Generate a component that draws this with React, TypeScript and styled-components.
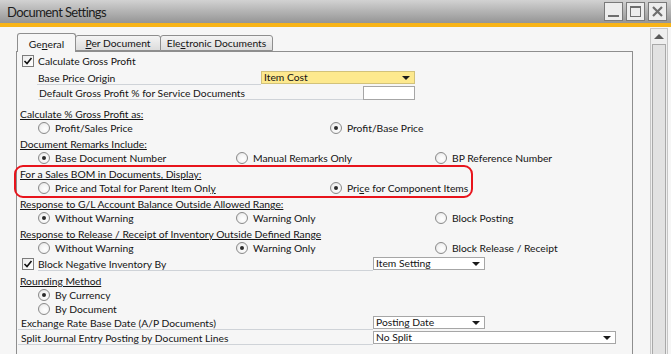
import React from 'react';
import styled, { createGlobalStyle } from 'styled-components';

const Global = createGlobalStyle`
  html, body { margin: 0; padding: 0; background: #f6f6f6; }
  body {
    font-family: Lato, "Liberation Sans", Arial, sans-serif;
    font-size: 10.3px;
    color: #141414;
  }
  * { box-sizing: border-box; }
`;

const Window = styled.div`
  width: 671px;
  height: 354px;
  overflow: hidden;
  display: flex;
  flex-direction: column;
  background: #f6f6f6;
`;

const TitleBar = styled.div`
  height: 23px;
  flex: none;
  display: flex;
  align-items: flex-start;
  justify-content: space-between;
  padding: 0 4px 0 7px;
  background: linear-gradient(#d2d2d2, #b0b0b0 55%, #959595);
`;

const Title = styled.div`
  font-size: 13px;
  letter-spacing: -0.6px;
  line-height: 24px;
  color: #1c1c1c;
`;

const WinButtons = styled.div`
  display: flex;
  gap: 3px;
  margin-top: 2px;
`;

const WinButton = styled.div`
  width: 19px;
  height: 19px;
  border: 1px solid #7a7a7a;
  background: #ededed;
  display: flex;
  align-items: center;
  justify-content: center;
`;

const OrangeBar = styled.div`
  height: 4px;
  flex: none;
  background: #f8b418;
`;

const Body = styled.div`
  flex: 1;
  display: flex;
  min-height: 0;
`;

const Main = styled.div`
  width: 633px;
  flex: none;
  padding: 6px 0 0 16px;
  display: flex;
  flex-direction: column;
`;

const TabStrip = styled.div`
  height: 18px;
  display: flex;
  align-items: flex-end;
  padding-left: 1px;
  position: relative;
  z-index: 1;
`;

const Tab = styled.div<{ $active?: boolean; $w: number }>`
  width: ${(p) => p.$w}px;
  height: ${(p) => (p.$active ? 19 : 16)}px;
  margin-bottom: ${(p) => (p.$active ? -1 : 0)}px;
  margin-left: -1px;
  border: 1px solid #8e8e8e;
  border-bottom: ${(p) => (p.$active ? 'none' : '1px solid #8e8e8e')};
  border-radius: 3px 3px 0 0;
  background: ${(p) => (p.$active ? '#f6f6f6' : 'linear-gradient(#f4f4f4, #dcdcdc)')};
  display: flex;
  justify-content: center;
  align-items: center;
  padding-top: ${(p) => (p.$active ? 1 : 0)}px;
  &:first-child { margin-left: 0; }
`;

const Panel = styled.div`
  flex: 1;
  border: 1px solid #8e8e8e;
  border-bottom: none;
  display: flex;
  flex-direction: column;
`;

const CheckRow = styled.div<{ $h: number }>`
  height: ${(p) => p.$h}px;
  padding-left: 5px;
  display: flex;
  align-items: center;
`;

const CheckBox = styled.div<{ $mt?: number }>`
  width: 12px;
  height: 12px;
  margin-top: ${(p) => p.$mt ?? 0}px;
  align-self: center;
  border: 1px solid #7c7c7c;
  background: linear-gradient(135deg, #ececec, #ffffff);
  display: flex;
  align-items: center;
  justify-content: center;
  flex: none;
  margin-right: 4px;
`;

const Label = styled.span`
  white-space: nowrap;
`;

const FieldRow = styled.div<{ $h: number; $pl: number }>`
  height: ${(p) => p.$h}px;
  padding-left: ${(p) => p.$pl}px;
  display: flex;
  align-items: stretch;
`;

const FieldLine = styled.div<{ $w: number; $pl?: number }>`
  width: ${(p) => p.$w}px;
  flex: none;
  border-bottom: 1px solid #cfd3d8;
  display: flex;
  align-items: flex-end;
  padding-left: ${(p) => p.$pl ?? 0}px;
  line-height: 12px;
  white-space: nowrap;
`;

const Select = styled.div<{ $w: number; $yellow?: boolean; $mt: number }>`
  width: ${(p) => p.$w}px;
  height: 13px;
  margin-top: ${(p) => p.$mt}px;
  flex: none;
  border: 1px solid ${(p) => (p.$yellow ? '#d2c27a' : '#a6a6a6')};
  background: ${(p) => (p.$yellow ? '#fde98e' : '#ffffff')};
  display: flex;
  align-items: center;
  justify-content: space-between;
  padding: 0 4px 0 2px;
  line-height: 11px;
`;

const Arrow = styled.span`
  width: 0;
  height: 0;
  border-left: 4px solid transparent;
  border-right: 4px solid transparent;
  border-top: 4px solid #1a1a1a;
`;

const TextInput = styled.div`
  width: 52px;
  height: 14px;
  margin-top: 1px;
  border: 1px solid #a6a6a6;
  background: #ffffff;
  flex: none;
`;

const Section = styled.div<{ $mt?: number }>`
  position: relative;
  margin-top: ${(p) => p.$mt ?? 0}px;
`;

const Header = styled.div`
  height: 16px;
  padding: 2px 0 0 3px;
  line-height: 14px;
  white-space: nowrap;
  span { text-decoration: underline; text-underline-offset: 1px; }
`;

const RadioRow = styled.div<{ $cols: string; $h?: number }>`
  height: ${(p) => p.$h ?? 14}px;
  padding-left: 21px;
  display: grid;
  grid-template-columns: ${(p) => p.$cols};
  align-items: center;
`;

const RadioItem = styled.div`
  display: flex;
  align-items: center;
  white-space: nowrap;
`;

const RadioCircle = styled.span<{ $on?: boolean }>`
  width: 12px;
  height: 12px;
  border-radius: 50%;
  border: 1px solid #8a8a8a;
  background: radial-gradient(circle at 60% 60%, #ffffff 0%, #f4f4f4 50%, #dadada 100%);
  display: flex;
  align-items: center;
  justify-content: center;
  margin-right: 5px;
  flex: none;
  &::after {
    content: '';
    width: 4px;
    height: 4px;
    border-radius: 50%;
    background: ${(p) => (p.$on ? '#2b2b2b' : 'transparent')};
  }
`;

const Highlight = styled.div`
  position: absolute;
  left: -3px;
  top: 0;
  width: 459px;
  height: 33px;
  border: 2px solid #e8141c;
  border-radius: 9px;
  pointer-events: none;
`;

const ScrollBar = styled.div`
  width: 18px;
  margin: 1px 0 0 17px;
  border: 1px solid #c6c6c6;
  border-bottom: none;
  background: #efefef;
  display: flex;
  flex-direction: column;
`;

const ScrollUp = styled.div`
  height: 15px;
  display: flex;
  align-items: center;
  justify-content: center;
`;

const UpArrow = styled.span`
  width: 0;
  height: 0;
  border-left: 5px solid transparent;
  border-right: 5px solid transparent;
  border-bottom: 5px solid #5a5a5a;
`;

const Track = styled.div`
  flex: 1;
  margin: 0 1px;
  border: 1px solid #a9a9a9;
  border-bottom: none;
  background: #e2e2e2;
`;

const Check = () => (
  <svg width="10" height="10" viewBox="0 0 10 10">
    <path d="M1.5 5 L4 7.5 L8.5 2" fill="none" stroke="#111" strokeWidth="1.6" />
  </svg>
);

const Radio = ({ on, children }: { on?: boolean; children: React.ReactNode }) => (
  <RadioItem>
    <RadioCircle $on={on} />
    <Label>{children}</Label>
  </RadioItem>
);

const COLS3 = '198px 199px 1fr';
const COLS2 = '292px 1fr';

export default function App() {
  return (
    <Window>
      <Global />
      <TitleBar>
        <Title>Document Settings</Title>
        <WinButtons>
          <WinButton>
            <svg width="13" height="13" viewBox="0 0 13 13">
              <rect x="1" y="10" width="11" height="2" fill="#6e6e6e" />
            </svg>
          </WinButton>
          <WinButton>
            <svg width="13" height="13" viewBox="0 0 13 13">
              <rect x="1.5" y="1.5" width="10" height="10" fill="none" stroke="#6e6e6e" strokeWidth="1" />
              <rect x="1" y="1" width="11" height="2" fill="#6e6e6e" />
            </svg>
          </WinButton>
          <WinButton>
            <svg width="13" height="13" viewBox="0 0 13 13">
              <path d="M2 2 L11 11 M11 2 L2 11" stroke="#6e6e6e" strokeWidth="2.2" />
            </svg>
          </WinButton>
        </WinButtons>
      </TitleBar>
      <OrangeBar />
      <Body>
        <Main>
          <TabStrip>
            <Tab $active $w={59}>
              <span>
                Ge<u>n</u>eral
              </span>
            </Tab>
            <Tab $w={86}>
              <span>
                <u>P</u>er Document
              </span>
            </Tab>
            <Tab $w={113}>
              <span>
                Ele<u>c</u>tronic Documents
              </span>
            </Tab>
          </TabStrip>
          <Panel>
            <CheckRow $h={18}>
              <CheckBox>
                <Check />
              </CheckBox>
              <Label>Calculate Gross Profit</Label>
            </CheckRow>
            <FieldRow $h={15} $pl={20}>
              <FieldLine $w={224} $pl={1}>Base Price Origin</FieldLine>
              <Select $w={154} $yellow $mt={1}>
                <span>Item Cost</span>
                <Arrow />
              </Select>
            </FieldRow>
            <FieldRow $h={15} $pl={21}>
              <FieldLine $w={325} $pl={1}>Default Gross Profit % for Service Documents</FieldLine>
              <TextInput />
            </FieldRow>

            <Section $mt={5}>
              <Header>
                <span>Calculate % Gross Profit as:</span>
              </Header>
              <RadioRow $cols={COLS2}>
                <Radio>Profit/Sales Price</Radio>
                <Radio on>Profit/Base Price</Radio>
              </RadioRow>
            </Section>

            <Section>
              <Header>
                <span>Document Remarks Include:</span>
              </Header>
              <RadioRow $cols={COLS3}>
                <Radio on>Base Document Number</Radio>
                <Radio>Manual Remarks Only</Radio>
                <Radio>BP Reference Number</Radio>
              </RadioRow>
            </Section>

            <Section>
              <Header>
                <span>For a Sales BOM in Documents, Display:</span>
              </Header>
              <RadioRow $cols={COLS2}>
                <Radio>
                  Price and Total for Parent Item Onl<u>y</u>
                </Radio>
                <Radio on>
                  Pri<u>c</u>e for Component Items
                </Radio>
              </RadioRow>
              <Highlight />
            </Section>

            <Section>
              <Header>
                <span>Response to G/L Account Balance Outside Allowed Range:</span>
              </Header>
              <RadioRow $cols={COLS3}>
                <Radio on>Without Warning</Radio>
                <Radio>Warning Only</Radio>
                <Radio>Block Posting</Radio>
              </RadioRow>
            </Section>

            <Section>
              <Header>
                <span>Response to Release / Receipt of Inventory Outside Defined Range</span>
              </Header>
              <RadioRow $cols={COLS3}>
                <Radio>Without Warning</Radio>
                <Radio on>Warning Only</Radio>
                <Radio>Block Release / Receipt</Radio>
              </RadioRow>
            </Section>

            <FieldRow $h={16} $pl={5}>
              <CheckBox $mt={1}>
                <Check />
              </CheckBox>
              <FieldLine $w={335}>Block Negative Inventory By</FieldLine>
              <Select $w={112} $mt={2}>
                <span>Item Setting</span>
                <Arrow />
              </Select>
            </FieldRow>

            <Section $mt={1}>
              <Header>
                <span>Rounding Method</span>
              </Header>
              <RadioRow $cols="1fr">
                <Radio on>By Currency</Radio>
              </RadioRow>
              <RadioRow $cols="1fr" $h={13}>
                <Radio>By Document</Radio>
              </RadioRow>
            </Section>

            <FieldRow $h={15} $pl={1}>
              <FieldLine $w={355} $pl={3}>Exchange Rate Base Date (A/P Documents)</FieldLine>
              <Select $w={112} $mt={1}>
                <span>Posting Date</span>
                <Arrow />
              </Select>
            </FieldRow>
            <FieldRow $h={15} $pl={1}>
              <FieldLine $w={355} $pl={3}>Split Journal Entry Posting by Document Lines</FieldLine>
              <Select $w={243} $mt={1}>
                <span>No Split</span>
                <Arrow />
              </Select>
            </FieldRow>
          </Panel>
        </Main>
        <ScrollBar>
          <ScrollUp>
            <UpArrow />
          </ScrollUp>
          <Track />
        </ScrollBar>
      </Body>
    </Window>
  );
}
